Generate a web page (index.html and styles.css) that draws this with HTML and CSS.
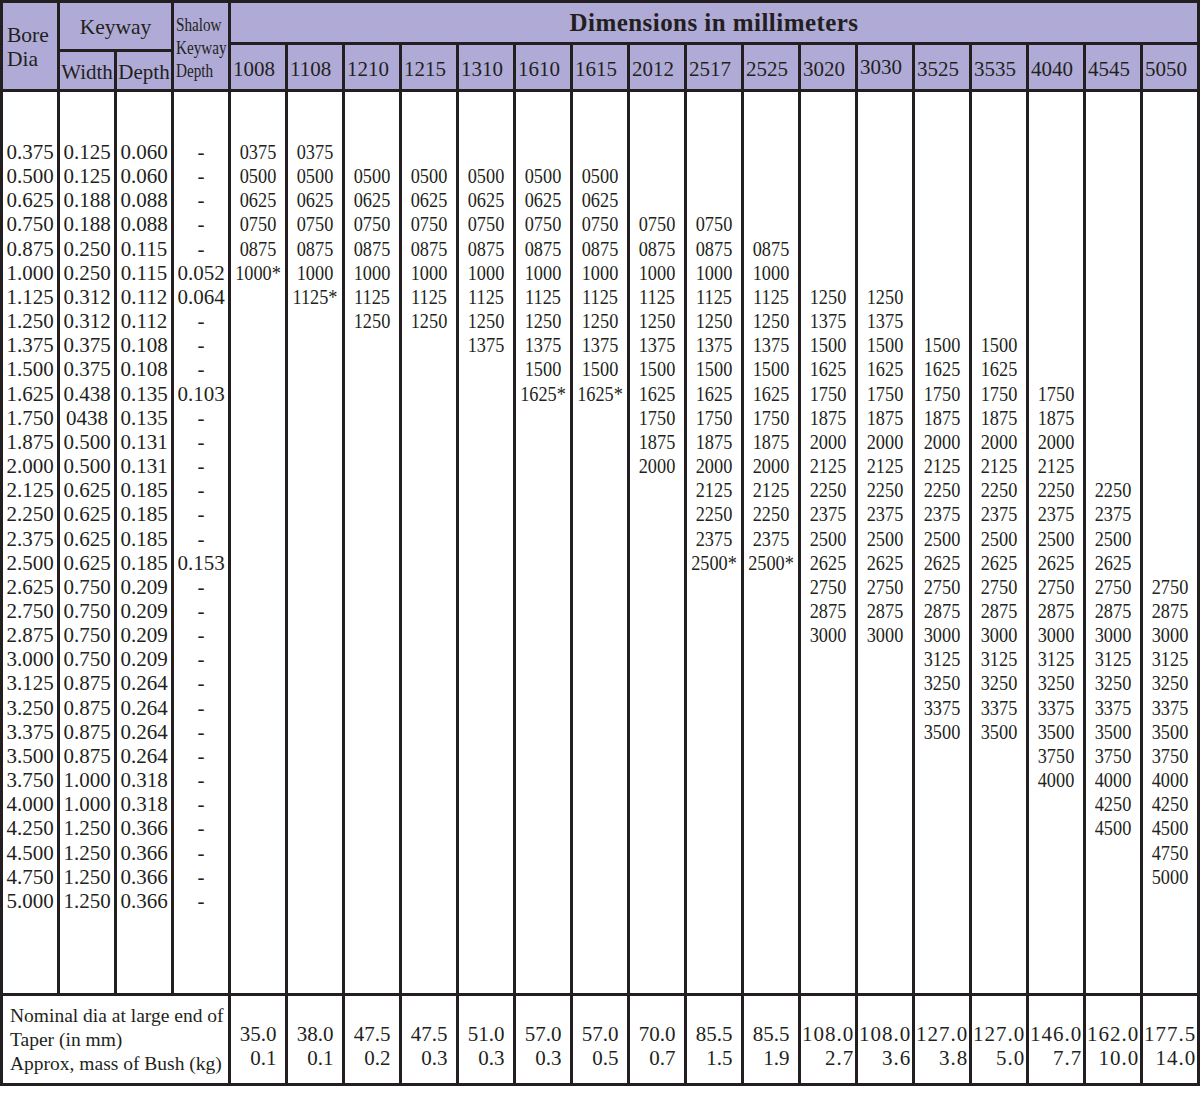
FILE: index.html
```html
<!DOCTYPE html>
<html lang="en">
<head>
<meta charset="utf-8">
<title>Taper Bush Dimensions</title>
<link rel="stylesheet" href="styles.css">
</head>
<body>
<div class="tbl">
  <div class="h bore">Bore<br>Dia</div>
  <div class="h keyway">Keyway</div>
  <div class="h shal"><div class="shal-t">Shalow<br>Keyway<br>Depth</div></div>
  <div class="h dims">Dimensions in millimeters</div>
  <div class="h sub sub-w">Width</div>
  <div class="h sub sub-d">Depth</div>
  <div class="h num">1008</div>
  <div class="h num">1108</div>
  <div class="h num">1210</div>
  <div class="h num">1215</div>
  <div class="h num">1310</div>
  <div class="h num">1610</div>
  <div class="h num">1615</div>
  <div class="h num">2012</div>
  <div class="h num">2517</div>
  <div class="h num">2525</div>
  <div class="h num">3020</div>
  <div class="h num up">3030</div>
  <div class="h num">3525</div>
  <div class="h num">3535</div>
  <div class="h num">4040</div>
  <div class="h num">4545</div>
  <div class="h num">5050</div>

  <div class="bc"><div class="ln">0.375</div><div class="ln">0.500</div><div class="ln">0.625</div><div class="ln">0.750</div><div class="ln">0.875</div><div class="ln">1.000</div><div class="ln">1.125</div><div class="ln">1.250</div><div class="ln">1.375</div><div class="ln">1.500</div><div class="ln">1.625</div><div class="ln">1.750</div><div class="ln">1.875</div><div class="ln">2.000</div><div class="ln">2.125</div><div class="ln">2.250</div><div class="ln">2.375</div><div class="ln">2.500</div><div class="ln">2.625</div><div class="ln">2.750</div><div class="ln">2.875</div><div class="ln">3.000</div><div class="ln">3.125</div><div class="ln">3.250</div><div class="ln">3.375</div><div class="ln">3.500</div><div class="ln">3.750</div><div class="ln">4.000</div><div class="ln">4.250</div><div class="ln">4.500</div><div class="ln">4.750</div><div class="ln">5.000</div></div>
  <div class="bc"><div class="ln">0.125</div><div class="ln">0.125</div><div class="ln">0.188</div><div class="ln">0.188</div><div class="ln">0.250</div><div class="ln">0.250</div><div class="ln">0.312</div><div class="ln">0.312</div><div class="ln">0.375</div><div class="ln">0.375</div><div class="ln">0.438</div><div class="ln">0438</div><div class="ln">0.500</div><div class="ln">0.500</div><div class="ln">0.625</div><div class="ln">0.625</div><div class="ln">0.625</div><div class="ln">0.625</div><div class="ln">0.750</div><div class="ln">0.750</div><div class="ln">0.750</div><div class="ln">0.750</div><div class="ln">0.875</div><div class="ln">0.875</div><div class="ln">0.875</div><div class="ln">0.875</div><div class="ln">1.000</div><div class="ln">1.000</div><div class="ln">1.250</div><div class="ln">1.250</div><div class="ln">1.250</div><div class="ln">1.250</div></div>
  <div class="bc"><div class="ln">0.060</div><div class="ln">0.060</div><div class="ln">0.088</div><div class="ln">0.088</div><div class="ln">0.115</div><div class="ln">0.115</div><div class="ln">0.112</div><div class="ln">0.112</div><div class="ln">0.108</div><div class="ln">0.108</div><div class="ln">0.135</div><div class="ln">0.135</div><div class="ln">0.131</div><div class="ln">0.131</div><div class="ln">0.185</div><div class="ln">0.185</div><div class="ln">0.185</div><div class="ln">0.185</div><div class="ln">0.209</div><div class="ln">0.209</div><div class="ln">0.209</div><div class="ln">0.209</div><div class="ln">0.264</div><div class="ln">0.264</div><div class="ln">0.264</div><div class="ln">0.264</div><div class="ln">0.318</div><div class="ln">0.318</div><div class="ln">0.366</div><div class="ln">0.366</div><div class="ln">0.366</div><div class="ln">0.366</div></div>
  <div class="bc"><div class="ln">-</div><div class="ln">-</div><div class="ln">-</div><div class="ln">-</div><div class="ln">-</div><div class="ln">0.052</div><div class="ln">0.064</div><div class="ln">-</div><div class="ln">-</div><div class="ln">-</div><div class="ln">0.103</div><div class="ln">-</div><div class="ln">-</div><div class="ln">-</div><div class="ln">-</div><div class="ln">-</div><div class="ln">-</div><div class="ln">0.153</div><div class="ln">-</div><div class="ln">-</div><div class="ln">-</div><div class="ln">-</div><div class="ln">-</div><div class="ln">-</div><div class="ln">-</div><div class="ln">-</div><div class="ln">-</div><div class="ln">-</div><div class="ln">-</div><div class="ln">-</div><div class="ln">-</div><div class="ln">-</div></div>

  <div class="bc"><div class="sz"><div class="ln">0375</div><div class="ln">0500</div><div class="ln">0625</div><div class="ln">0750</div><div class="ln">0875</div><div class="ln">1000*</div></div></div>
  <div class="bc"><div class="sz"><div class="ln">0375</div><div class="ln">0500</div><div class="ln">0625</div><div class="ln">0750</div><div class="ln">0875</div><div class="ln">1000</div><div class="ln">1125*</div></div></div>
  <div class="bc"><div class="sz"><div class="ln"></div><div class="ln">0500</div><div class="ln">0625</div><div class="ln">0750</div><div class="ln">0875</div><div class="ln">1000</div><div class="ln">1125</div><div class="ln">1250</div></div></div>
  <div class="bc"><div class="sz"><div class="ln"></div><div class="ln">0500</div><div class="ln">0625</div><div class="ln">0750</div><div class="ln">0875</div><div class="ln">1000</div><div class="ln">1125</div><div class="ln">1250</div></div></div>
  <div class="bc"><div class="sz"><div class="ln"></div><div class="ln">0500</div><div class="ln">0625</div><div class="ln">0750</div><div class="ln">0875</div><div class="ln">1000</div><div class="ln">1125</div><div class="ln">1250</div><div class="ln">1375</div></div></div>
  <div class="bc"><div class="sz"><div class="ln"></div><div class="ln">0500</div><div class="ln">0625</div><div class="ln">0750</div><div class="ln">0875</div><div class="ln">1000</div><div class="ln">1125</div><div class="ln">1250</div><div class="ln">1375</div><div class="ln">1500</div><div class="ln">1625*</div></div></div>
  <div class="bc"><div class="sz"><div class="ln"></div><div class="ln">0500</div><div class="ln">0625</div><div class="ln">0750</div><div class="ln">0875</div><div class="ln">1000</div><div class="ln">1125</div><div class="ln">1250</div><div class="ln">1375</div><div class="ln">1500</div><div class="ln">1625*</div></div></div>
  <div class="bc"><div class="sz"><div class="ln"></div><div class="ln"></div><div class="ln"></div><div class="ln">0750</div><div class="ln">0875</div><div class="ln">1000</div><div class="ln">1125</div><div class="ln">1250</div><div class="ln">1375</div><div class="ln">1500</div><div class="ln">1625</div><div class="ln">1750</div><div class="ln">1875</div><div class="ln">2000</div></div></div>
  <div class="bc"><div class="sz"><div class="ln"></div><div class="ln"></div><div class="ln"></div><div class="ln">0750</div><div class="ln">0875</div><div class="ln">1000</div><div class="ln">1125</div><div class="ln">1250</div><div class="ln">1375</div><div class="ln">1500</div><div class="ln">1625</div><div class="ln">1750</div><div class="ln">1875</div><div class="ln">2000</div><div class="ln">2125</div><div class="ln">2250</div><div class="ln">2375</div><div class="ln">2500*</div></div></div>
  <div class="bc"><div class="sz"><div class="ln"></div><div class="ln"></div><div class="ln"></div><div class="ln"></div><div class="ln">0875</div><div class="ln">1000</div><div class="ln">1125</div><div class="ln">1250</div><div class="ln">1375</div><div class="ln">1500</div><div class="ln">1625</div><div class="ln">1750</div><div class="ln">1875</div><div class="ln">2000</div><div class="ln">2125</div><div class="ln">2250</div><div class="ln">2375</div><div class="ln">2500*</div></div></div>
  <div class="bc"><div class="sz"><div class="ln"></div><div class="ln"></div><div class="ln"></div><div class="ln"></div><div class="ln"></div><div class="ln"></div><div class="ln">1250</div><div class="ln">1375</div><div class="ln">1500</div><div class="ln">1625</div><div class="ln">1750</div><div class="ln">1875</div><div class="ln">2000</div><div class="ln">2125</div><div class="ln">2250</div><div class="ln">2375</div><div class="ln">2500</div><div class="ln">2625</div><div class="ln">2750</div><div class="ln">2875</div><div class="ln">3000</div></div></div>
  <div class="bc"><div class="sz"><div class="ln"></div><div class="ln"></div><div class="ln"></div><div class="ln"></div><div class="ln"></div><div class="ln"></div><div class="ln">1250</div><div class="ln">1375</div><div class="ln">1500</div><div class="ln">1625</div><div class="ln">1750</div><div class="ln">1875</div><div class="ln">2000</div><div class="ln">2125</div><div class="ln">2250</div><div class="ln">2375</div><div class="ln">2500</div><div class="ln">2625</div><div class="ln">2750</div><div class="ln">2875</div><div class="ln">3000</div></div></div>
  <div class="bc"><div class="sz"><div class="ln"></div><div class="ln"></div><div class="ln"></div><div class="ln"></div><div class="ln"></div><div class="ln"></div><div class="ln"></div><div class="ln"></div><div class="ln">1500</div><div class="ln">1625</div><div class="ln">1750</div><div class="ln">1875</div><div class="ln">2000</div><div class="ln">2125</div><div class="ln">2250</div><div class="ln">2375</div><div class="ln">2500</div><div class="ln">2625</div><div class="ln">2750</div><div class="ln">2875</div><div class="ln">3000</div><div class="ln">3125</div><div class="ln">3250</div><div class="ln">3375</div><div class="ln">3500</div></div></div>
  <div class="bc"><div class="sz"><div class="ln"></div><div class="ln"></div><div class="ln"></div><div class="ln"></div><div class="ln"></div><div class="ln"></div><div class="ln"></div><div class="ln"></div><div class="ln">1500</div><div class="ln">1625</div><div class="ln">1750</div><div class="ln">1875</div><div class="ln">2000</div><div class="ln">2125</div><div class="ln">2250</div><div class="ln">2375</div><div class="ln">2500</div><div class="ln">2625</div><div class="ln">2750</div><div class="ln">2875</div><div class="ln">3000</div><div class="ln">3125</div><div class="ln">3250</div><div class="ln">3375</div><div class="ln">3500</div></div></div>
  <div class="bc"><div class="sz"><div class="ln"></div><div class="ln"></div><div class="ln"></div><div class="ln"></div><div class="ln"></div><div class="ln"></div><div class="ln"></div><div class="ln"></div><div class="ln"></div><div class="ln"></div><div class="ln">1750</div><div class="ln">1875</div><div class="ln">2000</div><div class="ln">2125</div><div class="ln">2250</div><div class="ln">2375</div><div class="ln">2500</div><div class="ln">2625</div><div class="ln">2750</div><div class="ln">2875</div><div class="ln">3000</div><div class="ln">3125</div><div class="ln">3250</div><div class="ln">3375</div><div class="ln">3500</div><div class="ln">3750</div><div class="ln">4000</div></div></div>
  <div class="bc"><div class="sz"><div class="ln"></div><div class="ln"></div><div class="ln"></div><div class="ln"></div><div class="ln"></div><div class="ln"></div><div class="ln"></div><div class="ln"></div><div class="ln"></div><div class="ln"></div><div class="ln"></div><div class="ln"></div><div class="ln"></div><div class="ln"></div><div class="ln">2250</div><div class="ln">2375</div><div class="ln">2500</div><div class="ln">2625</div><div class="ln">2750</div><div class="ln">2875</div><div class="ln">3000</div><div class="ln">3125</div><div class="ln">3250</div><div class="ln">3375</div><div class="ln">3500</div><div class="ln">3750</div><div class="ln">4000</div><div class="ln">4250</div><div class="ln">4500</div></div></div>
  <div class="bc"><div class="sz"><div class="ln"></div><div class="ln"></div><div class="ln"></div><div class="ln"></div><div class="ln"></div><div class="ln"></div><div class="ln"></div><div class="ln"></div><div class="ln"></div><div class="ln"></div><div class="ln"></div><div class="ln"></div><div class="ln"></div><div class="ln"></div><div class="ln"></div><div class="ln"></div><div class="ln"></div><div class="ln"></div><div class="ln">2750</div><div class="ln">2875</div><div class="ln">3000</div><div class="ln">3125</div><div class="ln">3250</div><div class="ln">3375</div><div class="ln">3500</div><div class="ln">3750</div><div class="ln">4000</div><div class="ln">4250</div><div class="ln">4500</div><div class="ln">4750</div><div class="ln">5000</div></div></div>

  <div class="fl">Nominal dia at large end of<br>Taper (in mm)<br>Approx, mass of Bush (kg)</div>
  <div class="fv"><span>35.0<br>0.1</span></div>
  <div class="fv"><span>38.0<br>0.1</span></div>
  <div class="fv"><span>47.5<br>0.2</span></div>
  <div class="fv"><span>47.5<br>0.3</span></div>
  <div class="fv"><span>51.0<br>0.3</span></div>
  <div class="fv"><span>57.0<br>0.3</span></div>
  <div class="fv"><span>57.0<br>0.5</span></div>
  <div class="fv"><span>70.0<br>0.7</span></div>
  <div class="fv"><span>85.5<br>1.5</span></div>
  <div class="fv"><span>85.5<br>1.9</span></div>
  <div class="fv w"><span>108.0<br>2.7</span></div>
  <div class="fv w"><span>108.0<br>3.6</span></div>
  <div class="fv w"><span>127.0<br>3.8</span></div>
  <div class="fv w"><span>127.0<br>5.0</span></div>
  <div class="fv w"><span>146.0<br>7.7</span></div>
  <div class="fv w"><span>162.0<br>10.0</span></div>
  <div class="fv w"><span>177.5<br>14.0</span></div>
</div>
</body>
</html>
```

FILE: styles.css
```css
* {
  box-sizing: border-box;
  margin: 0;
  padding: 0;
}

html,
body {
  background: #ffffff;
}

body {
  margin: 0;
  font-family: "Liberation Serif", "Times New Roman", serif;
  color: #231f20;
}

.tbl {
  display: grid;
  grid-template-columns: repeat(21, 54px);
  grid-template-rows: 39px 4px 37px 901px 87px;
  gap: 3px;
  padding: 3px;
  width: 1200px;
  background: #231f20;
}

/* header */
.h {
  background: #afabd6;
  font-size: 21px;
  line-height: 24px;
  white-space: nowrap;
}

.bore {
  grid-column: 1;
  grid-row: 1 / 4;
  display: flex;
  align-items: center;
  padding: 2px 0 0 4px;
  font-size: 21.5px;
}

.keyway {
  grid-column: 2 / 4;
  grid-row: 1 / 3;
  display: flex;
  align-items: center;
  justify-content: center;
  padding-top: 2px;
  font-size: 21.5px;
}

.shal {
  grid-column: 4;
  grid-row: 1 / 4;
  display: flex;
  align-items: center;
  padding: 3px 0 0 2px;
}

.shal-t {
  font-size: 19px;
  line-height: 23px;
  transform: scaleX(0.8);
  transform-origin: left center;
}

.dims {
  grid-column: 5 / 22;
  grid-row: 1;
  display: flex;
  align-items: center;
  justify-content: center;
  font-weight: 700;
  font-size: 25px;
  letter-spacing: 0.45px;
}

.sub {
  grid-row: 3;
  display: flex;
  align-items: center;
  justify-content: center;
  padding-top: 3px;
}

.sub-w {
  grid-column: 2;
}

.sub-d {
  grid-column: 3;
}

.num {
  grid-row: 2 / 4;
  display: flex;
  align-items: center;
  padding: 4px 0 0 2px;
}

.num.up {
  padding-top: 0;
}

/* body */
.bc {
  grid-row: 4;
  background: #ffffff;
  padding-top: 48px;
  font-size: 21px;
  text-align: center;
  white-space: nowrap;
}

.ln {
  height: 24.16px;
  line-height: 24.16px;
}

.sz {
  transform: scaleX(0.87);
}

/* footer */
.fl {
  grid-row: 5;
  grid-column: 1 / 5;
  background: #ffffff;
  display: flex;
  align-items: center;
  padding-left: 7px;
  font-size: 19.5px;
  line-height: 24px;
  white-space: nowrap;
}

.fv {
  grid-row: 5;
  background: #ffffff;
  display: flex;
  align-items: center;
  justify-content: center;
  padding-top: 12px;
  font-size: 21px;
  line-height: 24px;
}

.fv span {
  display: inline-block;
  text-align: right;
}

.fv.w span {
  letter-spacing: 1px;
}
```
